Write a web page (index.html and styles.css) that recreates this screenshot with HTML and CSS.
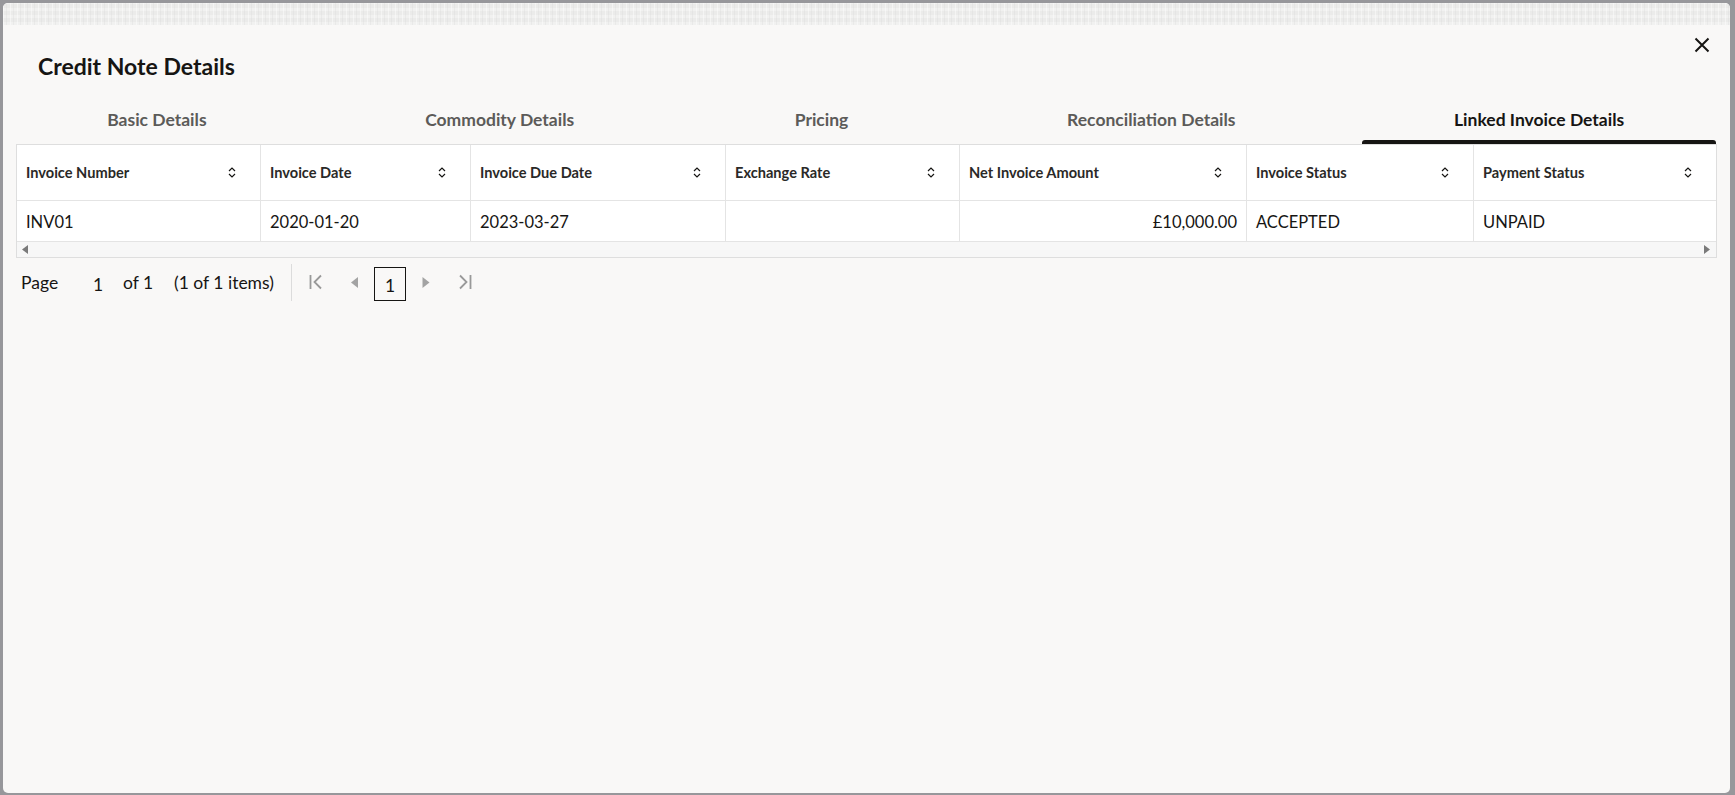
FILE: index.html
```html
<!DOCTYPE html>
<html lang="en">
<head>
<meta charset="utf-8">
<title>Credit Note Details</title>
<link rel="stylesheet" href="styles.css">
</head>
<body>
<div class="modal">
  <div class="drag-strip"></div>
  <div class="modal-header">
    <h1 class="title">Credit Note Details</h1>
    <button class="close" aria-label="Close">
      <svg width="16" height="16" viewBox="0 0 16 16"><path d="M1.5 1.5L14.5 14.5M14.5 1.5L1.5 14.5" stroke="#161513" stroke-width="2" fill="none"/></svg>
    </button>
  </div>
  <div class="tabs">
    <div class="tab">Basic Details</div>
    <div class="tab">Commodity Details</div>
    <div class="tab">Pricing</div>
    <div class="tab">Reconciliation Details</div>
    <div class="tab active">Linked Invoice Details</div>
  </div>
  <div class="table">
    <div class="row head">
      <div class="cell"><span>Invoice Number</span><svg class="sort" width="8" height="11" viewBox="0 0 8 11"><path d="M1 4L4 1L7 4M1 7L4 10L7 7" stroke="#161513" stroke-width="1.2" fill="none"/></svg></div>
      <div class="cell"><span>Invoice Date</span><svg class="sort" width="8" height="11" viewBox="0 0 8 11"><path d="M1 4L4 1L7 4M1 7L4 10L7 7" stroke="#161513" stroke-width="1.2" fill="none"/></svg></div>
      <div class="cell"><span>Invoice Due Date</span><svg class="sort" width="8" height="11" viewBox="0 0 8 11"><path d="M1 4L4 1L7 4M1 7L4 10L7 7" stroke="#161513" stroke-width="1.2" fill="none"/></svg></div>
      <div class="cell"><span>Exchange Rate</span><svg class="sort" width="8" height="11" viewBox="0 0 8 11"><path d="M1 4L4 1L7 4M1 7L4 10L7 7" stroke="#161513" stroke-width="1.2" fill="none"/></svg></div>
      <div class="cell"><span>Net Invoice Amount</span><svg class="sort" width="8" height="11" viewBox="0 0 8 11"><path d="M1 4L4 1L7 4M1 7L4 10L7 7" stroke="#161513" stroke-width="1.2" fill="none"/></svg></div>
      <div class="cell"><span>Invoice Status</span><svg class="sort" width="8" height="11" viewBox="0 0 8 11"><path d="M1 4L4 1L7 4M1 7L4 10L7 7" stroke="#161513" stroke-width="1.2" fill="none"/></svg></div>
      <div class="cell"><span>Payment Status</span><svg class="sort" width="8" height="11" viewBox="0 0 8 11"><path d="M1 4L4 1L7 4M1 7L4 10L7 7" stroke="#161513" stroke-width="1.2" fill="none"/></svg></div>
    </div>
    <div class="row body">
      <div class="cell">INV01</div>
      <div class="cell">2020-01-20</div>
      <div class="cell">2023-03-27</div>
      <div class="cell"></div>
      <div class="cell num">£10,000.00</div>
      <div class="cell">ACCEPTED</div>
      <div class="cell">UNPAID</div>
    </div>
    <div class="hscroll">
      <svg width="6" height="9" viewBox="0 0 6 9"><polygon points="6,0 6,9 0,4.5" fill="#7a7a7a"/></svg>
      <svg width="6" height="9" viewBox="0 0 6 9"><polygon points="0,0 0,9 6,4.5" fill="#7a7a7a"/></svg>
    </div>
  </div>
  <div class="pager">
    <span class="pg-label">Page</span>
    <span class="pg-input">1</span>
    <span class="pg-of">of 1</span>
    <span class="pg-items">(1 of 1 items)</span>
    <span class="pg-divider"></span>
    <svg class="pg-first" width="14" height="16" viewBox="0 0 14 16"><path d="M1.5 1V15M12 1.5L5.5 8L12 14.5" stroke="#999" stroke-width="1.8" fill="none"/></svg>
    <svg class="pg-prev" width="8" height="11" viewBox="0 0 8 11"><polygon points="7,0 7,11 0,5.5" fill="#a3a3a3"/></svg>
    <span class="pg-current">1</span>
    <svg class="pg-next" width="8" height="11" viewBox="0 0 8 11"><polygon points="0.5,0 0.5,11 7.5,5.5" fill="#a3a3a3"/></svg>
    <svg class="pg-last" width="14" height="16" viewBox="0 0 14 16"><path d="M2 1.5L8.5 8L2 14.5M12.5 1V15" stroke="#999" stroke-width="1.8" fill="none"/></svg>
  </div>
</div>
</body>
</html>
```

FILE: styles.css
```css
* { box-sizing: border-box; }
html, body { margin: 0; padding: 0; }
body {
  width: 1735px;
  height: 795px;
  overflow: hidden;
  background: #97979b;
  font-family: Lato, "Liberation Sans", sans-serif;
  color: #161513;
}
.modal {
  margin: 3px 0 0 3px;
  width: 1727px;
  height: 790px;
  background: #f9f8f7;
  border-radius: 5px;
  overflow: hidden;
}
.drag-strip {
  height: 22px;
  background-color: #ebebea;
  background-image:
    repeating-linear-gradient(90deg, rgba(255,255,255,0.45) 0 1px, transparent 1px 3px, rgba(215,215,215,0.3) 3px 4px, transparent 4px 7px),
    repeating-linear-gradient(0deg, rgba(255,255,255,0.3) 0 3px, transparent 3px 7px);
}
.modal-header {
  display: flex;
  justify-content: space-between;
  align-items: flex-start;
  height: 56px;
}
.title {
  margin: 26px 0 0 35px;
  font-size: 23px;
  line-height: 30px;
  font-weight: 700;
  color: #161513;
}
.close {
  margin: 11.5px 20px 0 0;
  padding: 0;
  border: 0;
  background: none;
  width: 16px;
  height: 16px;
  display: block;
}
.close svg { display: block; }
.tabs {
  display: grid;
  grid-template-columns: 308fr 378fr 266fr 394fr 382fr;
  height: 63px;
}
.tab {
  display: flex;
  flex-direction: column;
  padding-top: 27px;
  font-size: 17.5px;
  line-height: 23px;
  font-weight: 700;
  color: #5c5b59;
  text-align: center;
}
.tab::after {
  content: "";
  display: block;
  margin: 9px 14px 0;
  height: 4px;
  border-radius: 3px 3px 0 0;
}
.tab.active { color: #161513; }
.tab.active::after { background: #161513; }
.table {
  margin: 0 13px;
  width: 1701px;
  border: 1px solid #dedede;
  background: #fff;
}
.row {
  display: grid;
  grid-template-columns: 243px 210px 255px 234px 287px 227px 243px;
  border-bottom: 1px solid #e4e4e4;
}
.row.head { height: 56px; }
.row.body { height: 41px; }
.cell {
  display: flex;
  align-items: center;
  padding: 0 9px;
  border-left: 1px solid #e4e4e4;
}
.cell:first-child { border-left: 0; }
.head .cell {
  justify-content: space-between;
  padding-right: 24px;
  font-size: 14.6px;
  font-weight: 700;
  color: #2a2927;
}
.sort { display: block; }
.body .cell {
  font-size: 16.5px;
  padding-top: 1px;
}
.body .cell.num { justify-content: flex-end; }
.hscroll {
  height: 15px;
  background: #f7f7f7;
  display: flex;
  justify-content: space-between;
  align-items: center;
  padding: 0 6px 0 5px;
}
.hscroll svg { display: block; }
.pager {
  display: flex;
  align-items: center;
  height: 38px;
  margin-top: 5px;
  padding-left: 18px;
  font-size: 17.5px;
}
.pg-label { width: 72px; }
.pg-input { width: 30px; padding-top: 5px; }
.pg-of { width: 51px; }
.pg-items { width: 117px; }
.pg-divider {
  width: 1px;
  height: 37px;
  background: #dcdcdc;
}
.pg-first { margin-left: 17px; display: block; }
.pg-prev { margin-left: 28px; display: block; }
.pg-current {
  margin-left: 15px;
  width: 32px;
  height: 34px;
  border: 1px solid #161513;
  display: flex;
  align-items: center;
  justify-content: center;
  padding-top: 3px;
  margin-top: 4px;
}
.pg-next { margin-left: 16px; display: block; }
.pg-last { margin-left: 28px; display: block; }
```
